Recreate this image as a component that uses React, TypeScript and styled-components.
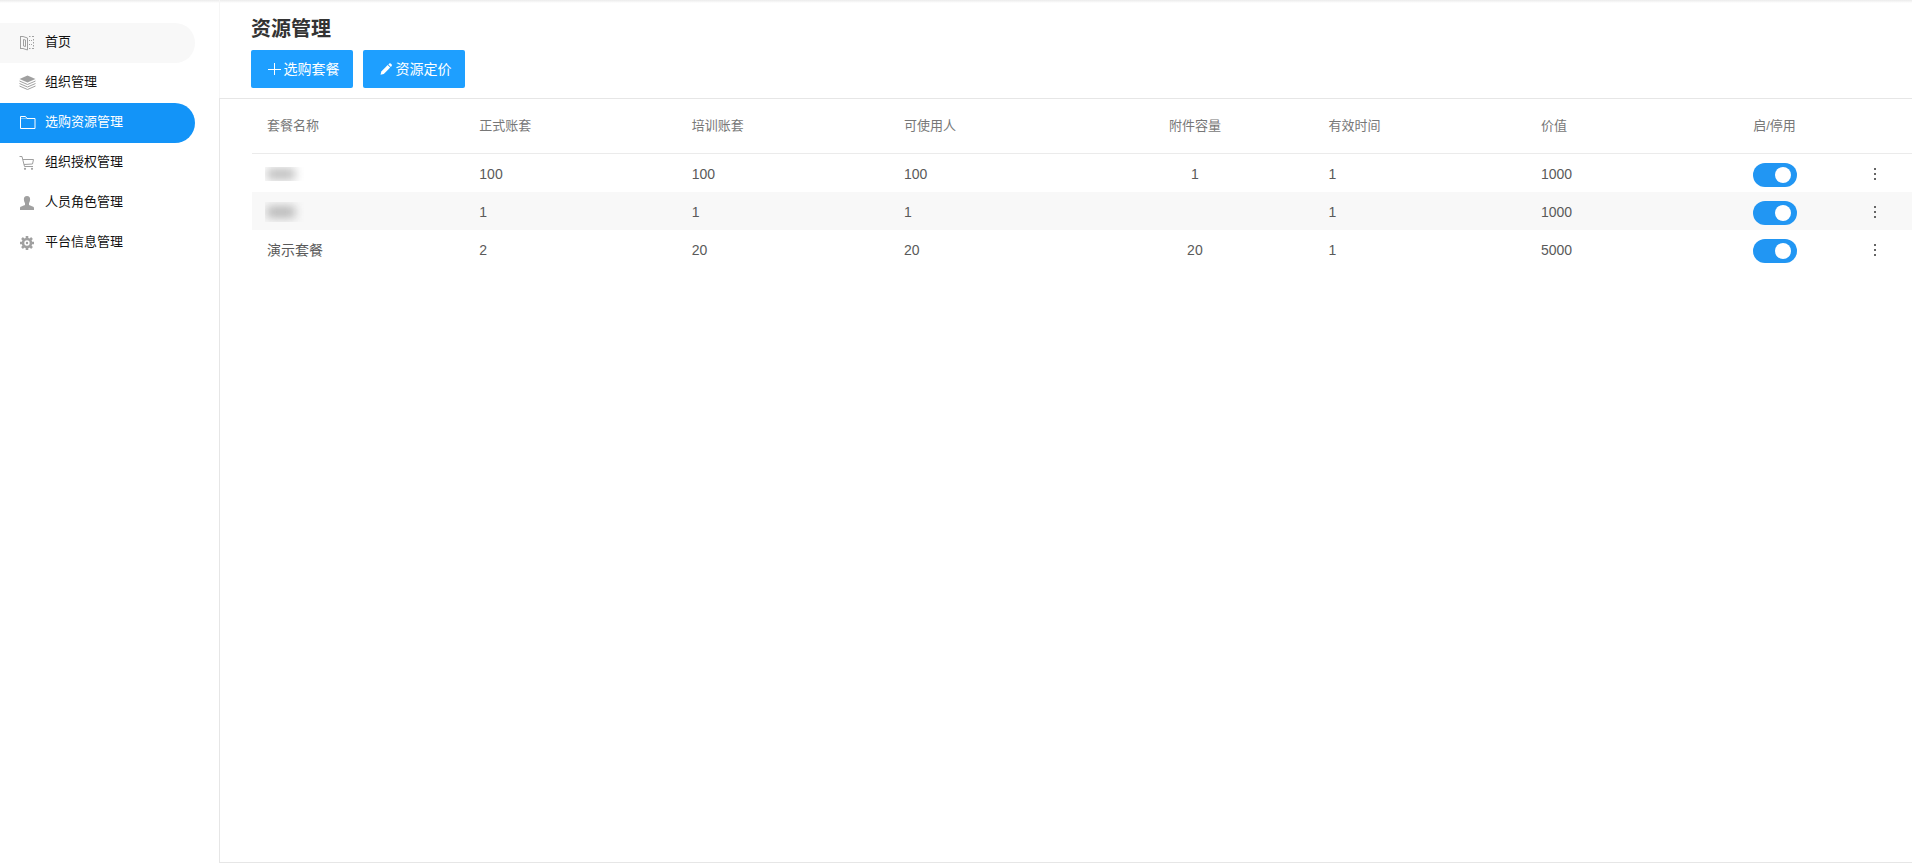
import React from "react";
import styled, { createGlobalStyle } from "styled-components";

const GlobalStyle = createGlobalStyle`
  *, *::before, *::after { box-sizing: border-box; }
  body {
    margin: 0;
    background: #fff;
    color: #222;
    font-family: "Liberation Sans", "Noto Sans CJK SC", sans-serif;
    font-size: 14px;
  }
`;

const Page = styled.div`
  display: flex;
  min-height: 100vh;
  background: linear-gradient(#ebebeb, #fff 3px) no-repeat;
`;

const Sidebar = styled.nav`
  flex: 0 0 219px;
  padding-top: 23px;
`;

const NavList = styled.ul`
  list-style: none;
  margin: 0;
  padding: 0;
`;

const NavLink = styled.a<{ $state?: "hover" | "active" }>`
  display: flex;
  align-items: center;
  gap: 9px;
  height: 40px;
  margin-right: 24px;
  padding-left: 19px;
  border-radius: 0 20px 20px 0;
  font-size: 13px;
  line-height: 18px;
  text-decoration: none;
  color: ${(p) => (p.$state === "active" ? "#fff" : "#111")};
  background: ${(p) =>
    p.$state === "active" ? "#1394f8" : p.$state === "hover" ? "#f8f8f8" : "transparent"};

  svg {
    flex: none;
    color: ${(p) => (p.$state === "active" ? "#fff" : "#a0a0a0")};
  }
`;

const NavText = styled.span`
  padding-bottom: 2px;
`;

const Main = styled.main`
  flex: 1;
  min-width: 0;
  display: flex;
  flex-direction: column;
  padding-bottom: 2px;
`;

const Header = styled.header`
  padding: 15px 32px 10px 31px;
  border-left: 1px solid #f6f6f6;
`;

const Title = styled.h1`
  margin: 0 0 7px;
  font-size: 20px;
  line-height: 28px;
  font-weight: 700;
  color: #333;
`;

const Actions = styled.div`
  display: flex;
  gap: 10px;
`;

const ActionButton = styled.button`
  display: flex;
  align-items: center;
  justify-content: center;
  gap: 3px;
  width: 102px;
  height: 38px;
  padding: 0 0 0 2px;
  border: 0;
  border-radius: 2px;
  background: #1e9fff;
  color: #fff;
  font: inherit;
  line-height: 20px;
  white-space: nowrap;
  cursor: pointer;
`;

const Panel = styled.section`
  flex: 1;
  padding-left: 32px;
  border: solid #e6e6e6;
  border-width: 1px 0 1px 1px;
`;

const Table = styled.table`
  width: 100%;
  table-layout: fixed;
  border-collapse: separate;
  border-spacing: 0;
`;

const Col = styled.col<{ $share?: string }>`
  width: ${(p) => p.$share ?? "auto"};
`;

const HeadCell = styled.th<{ $centered?: boolean }>`
  height: 55px;
  padding: ${(p) => (p.$centered ? "0 40px 3px 15px" : "0 0 3px 15px")};
  border-bottom: 1px solid #ebebeb;
  text-align: ${(p) => (p.$centered ? "center" : "left")};
  font-size: 13px;
  font-weight: 400;
  color: #777;
`;

const Row = styled.tr`
  &:nth-child(even) { background: #f8f8f8; }
`;

const Cell = styled.td<{ $centered?: boolean }>`
  height: 38px;
  padding: ${(p) => (p.$centered ? "2px 40px 0 15px" : "2px 0 0 15px")};
  text-align: ${(p) => (p.$centered ? "center" : "left")};
  line-height: 20px;
  color: #5a5a5a;
`;

const ToggleCell = styled(Cell)`
  padding-top: 4px;
`;

const MenuCell = styled(Cell)`
  padding: 0;
  text-align: center;
`;

const MaskedName = styled.span<{ $tall?: boolean }>`
  display: flex;
  align-items: center;
  width: 42px;
  height: ${(p) => (p.$tall ? "20px" : "14px")};
  margin-left: -2px;
  padding-left: 2px;
  overflow: hidden;

  &::before {
    content: "";
    width: 28px;
    height: 12px;
    background: ${(p) => (p.$tall ? "#b8b8b8" : "#c0c0c0")};
    filter: blur(5px);
  }
`;

const Toggle = styled.input`
  appearance: none;
  display: flex;
  align-items: center;
  width: 44px;
  height: 24px;
  margin: 0;
  padding: 4px;
  border-radius: 12px;
  background: #ccc;
  cursor: pointer;

  &::before {
    content: "";
    width: 16px;
    height: 16px;
    border-radius: 50%;
    background: #fff;
  }
  &:checked { background: #2196f3; }
  &:checked::before { margin-left: 18px; }
`;

const MenuButton = styled.button`
  display: inline-flex;
  align-items: center;
  justify-content: center;
  width: 20px;
  height: 20px;
  padding: 0;
  border: 0;
  background: none;
  color: #666;
  cursor: pointer;
  vertical-align: middle;
`;

const HomeIcon = () => (
  <svg width="17" height="16" viewBox="0 0 17 16" fill="none" stroke="currentColor" aria-hidden="true">
    <path d="M1.500 1V13.500M1 1.500H4L8.500 3V15L4 13.500H1" />
    <path d="M4.500 4.500L6.500 5V11.500L4.500 11Z" />
    <path d="M10 1.500H11.500M13 1.500H15M10 13.500H11.500M13 13.500H15M14.500 4V5.500M14.500 7V8.500M14.500 10V11.500M10.500 5V6M10.500 9V10M12 5.500H13M12 9.500H13" />
  </svg>
);

const LayersIcon = () => (
  <svg width="17" height="16" viewBox="0 0 17 16" fill="none" stroke="currentColor" aria-hidden="true">
    <path d="M8.500 .5L16.500 4L8.500 7.500L.5 4Z" fill="currentColor" stroke="none" />
    <path d="M.5 6L8.500 9.500L16.500 6M.5 8.500L8.500 12L16.500 8.500M.5 11L8.500 14.500L16.500 11" />
  </svg>
);

const FolderIcon = () => (
  <svg width="17" height="16" viewBox="0 0 17 16" fill="none" stroke="currentColor" aria-hidden="true">
    <path d="M1.500 13.500V1.500H6.500L8 3.500H16V13.500Z" />
    <path d="M2 3.500H8" strokeOpacity=".4" />
  </svg>
);

const CartIcon = () => (
  <svg width="17" height="16" viewBox="0 0 17 16" fill="none" stroke="currentColor" aria-hidden="true">
    <path d="M.5 1.500H3L5.500 11.500H14M3.800 4.500H14.500L13.500 9L5 9.500" />
    <circle cx="6" cy="13.800" r="1.100" fill="currentColor" stroke="none" />
    <circle cx="13" cy="13.800" r="1.100" fill="currentColor" stroke="none" />
  </svg>
);

const UserIcon = () => (
  <svg width="17" height="16" viewBox="0 0 17 16" fill="currentColor" aria-hidden="true">
    <path d="M8 1C10.300 1 11.200 2.200 11.100 4.600C11 6.600 10.400 7.600 10 8.300V10C11 11 15 11 15 13V15H1V13C1 11 5 11 6 10V8.300C5.600 7.600 5 6.600 4.900 4.600C4.800 2.200 5.700 1 8 1Z" />
  </svg>
);

const GearIcon = () => (
  <svg width="17" height="16" viewBox="0 0 17 16" fill="none" stroke="currentColor" aria-hidden="true">
    <circle cx="8" cy="8" r="4" strokeWidth="2.600" />
    <path
      d="M8 1V3.500M8 12.500V15M1 8H3.500M12.500 8H15M3 3L4.800 4.800M11.200 11.200L13 13M3 13L4.800 11.200M11.200 4.800L13 3"
      strokeWidth="2.600"
    />
    <circle cx="8" cy="8" r="1.200" fill="currentColor" stroke="none" />
  </svg>
);

const PlusIcon = () => (
  <svg width="14" height="14" viewBox="0 0 14 14" stroke="currentColor" aria-hidden="true">
    <path d="M7.500 1V13M1 7.500H14" />
  </svg>
);

const PencilIcon = () => (
  <svg width="14" height="14" viewBox="0 0 14 14" fill="currentColor" aria-hidden="true">
    <path d="M1.500 12.800L2.300 9.500L8.700 3.100L11.200 5.600L4.800 12Z" />
    <path d="M9.400 2.400L10.300 1.500Q11 1 11.700 1.600L12.700 2.600Q13.200 3.300 12.700 4L11.900 4.900Z" />
  </svg>
);

const DotsIcon = () => (
  <svg width="4" height="14" viewBox="0 0 4 14" fill="currentColor" aria-hidden="true">
    <path d="M1 1h2v2h-2zM1 6h2v2h-2zM1 11h2v2h-2z" />
  </svg>
);

type NavItem = { label: string; Icon: () => React.JSX.Element; state?: "hover" | "active" };

const navItems: NavItem[] = [
  { label: "首页", Icon: HomeIcon, state: "hover" },
  { label: "组织管理", Icon: LayersIcon },
  { label: "选购资源管理", Icon: FolderIcon, state: "active" },
  { label: "组织授权管理", Icon: CartIcon },
  { label: "人员角色管理", Icon: UserIcon },
  { label: "平台信息管理", Icon: GearIcon },
];

const columns = ["套餐名称", "正式账套", "培训账套", "可使用人", "附件容量", "有效时间", "价值", "启/停用", ""];
const CAPACITY = 4;

const plans = [
  { name: <MaskedName />, values: ["100", "100", "100", "1", "1", "1000"] },
  { name: <MaskedName $tall />, values: ["1", "1", "1", "", "1", "1000"] },
  { name: "演示套餐", values: ["2", "20", "20", "20", "1", "5000"] },
];

export default function App() {
  return (
    <>
      <GlobalStyle />
      <Page>
        <Sidebar>
          <NavList>
            {navItems.map(({ label, Icon, state }) => (
              <li key={label}>
                <NavLink href="#" $state={state} aria-current={state === "active" ? "page" : undefined}>
                  <Icon />
                  <NavText>{label}</NavText>
                </NavLink>
              </li>
            ))}
          </NavList>
        </Sidebar>
        <Main>
          <Header>
            <Title>资源管理</Title>
            <Actions>
              <ActionButton type="button"><PlusIcon />选购套餐</ActionButton>
              <ActionButton type="button"><PencilIcon />资源定价</ActionButton>
            </Actions>
          </Header>
          <Panel>
            <Table>
              <colgroup>
                {columns.map((c, i) => (
                  <Col key={i} $share={i < 7 ? "12.79%" : i === 7 ? "6%" : undefined} />
                ))}
              </colgroup>
              <thead>
                <tr>
                  {columns.map((c, i) => (
                    <HeadCell key={i} scope="col" $centered={i === CAPACITY}>{c}</HeadCell>
                  ))}
                </tr>
              </thead>
              <tbody>
                {plans.map((plan, r) => (
                  <Row key={r}>
                    <Cell>{plan.name}</Cell>
                    {plan.values.map((v, i) => (
                      <Cell key={i} $centered={i + 1 === CAPACITY}>{v}</Cell>
                    ))}
                    <ToggleCell>
                      <Toggle type="checkbox" role="switch" defaultChecked aria-label="启/停用" />
                    </ToggleCell>
                    <MenuCell>
                      <MenuButton type="button" aria-label="更多"><DotsIcon /></MenuButton>
                    </MenuCell>
                  </Row>
                ))}
              </tbody>
            </Table>
          </Panel>
        </Main>
      </Page>
    </>
  );
}
